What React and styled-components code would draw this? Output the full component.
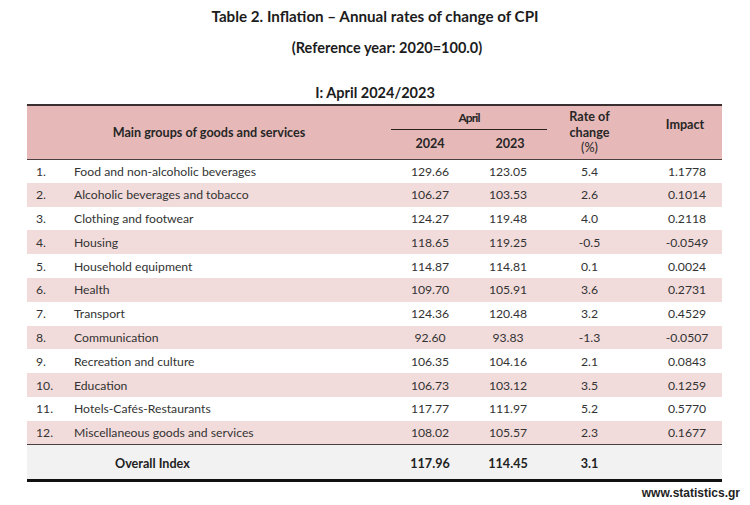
import React from 'react';
import styled, { createGlobalStyle } from 'styled-components';

const Global = createGlobalStyle`
  html, body {
    margin: 0;
    padding: 0;
    background: #ffffff;
  }
  body {
    font-family: Lato, "Open Sans", sans-serif;
    color: #2b2b2b;
  }
`;

const rows = [
  ['1.', 'Food and non-alcoholic beverages', '129.66', '123.05', '5.4', '1.1778'],
  ['2.', 'Alcoholic beverages and tobacco', '106.27', '103.53', '2.6', '0.1014'],
  ['3.', 'Clothing and footwear', '124.27', '119.48', '4.0', '0.2118'],
  ['4.', 'Housing', '118.65', '119.25', '-0.5', '-0.0549'],
  ['5.', 'Household equipment', '114.87', '114.81', '0.1', '0.0024'],
  ['6.', 'Health', '109.70', '105.91', '3.6', '0.2731'],
  ['7.', 'Transport', '124.36', '120.48', '3.2', '0.4529'],
  ['8.', 'Communication', '92.60', '93.83', '-1.3', '-0.0507'],
  ['9.', 'Recreation and culture', '106.35', '104.16', '2.1', '0.0843'],
  ['10.', 'Education', '106.73', '103.12', '3.5', '0.1259'],
  ['11.', 'Hotels-Cafés-Restaurants', '117.77', '111.97', '5.2', '0.5770'],
  ['12.', 'Miscellaneous goods and services', '108.02', '105.57', '2.3', '0.1677'],
];

const Page = styled.div`
  width: 750px;
  height: 505px;
  position: relative;
  overflow: hidden;
`;

const Title = styled.div`
  height: ${p => p.$h}px;
  padding-top: ${p => p.$top}px;
  box-sizing: border-box;
  text-align: center;
  font-weight: 700;
  font-size: ${p => p.$size || 14.5}px;
  color: #1c1c1c;
  padding-left: ${p => p.$shift || 0}px;
`;

const Table = styled.table`
  margin-left: 27px;
  width: 695px;
  border-collapse: collapse;
  table-layout: fixed;
  font-size: 12.2px;
`;

const HeadRow = styled.tr`
  background: #e6b9b8;
  height: ${p => p.$h}px;
`;

const HeadCell = styled.th`
  font-weight: 700;
  font-size: 12.6px;
  color: #262626;
  text-align: center;
  vertical-align: middle;
  padding: 0;
  padding-left: ${p => p.$pl || 0}px;
  border-top: ${p => (p.$top ? '2px solid #3a3030' : 'none')};
  border-bottom: ${p => (p.$line ? '1.5px solid #2a2020' : p.$bottom ? '1px solid #4a4040' : 'none')};
  line-height: 15.5px;
`;

const Light = styled.span`
  font-weight: 400;
`;

const AprilLabel = styled.span`
  letter-spacing: -0.9px;
  font-size: 12px;
`;

const Row = styled.tr`
  height: 23.8px;
  background: ${p => (p.$alt ? '#f2dcdb' : '#ffffff')};
`;

const Cell = styled.td`
  padding: 0;
  padding-left: ${p => p.$pl || 0}px;
  text-align: ${p => p.$align || 'center'};
  color: #333;
  white-space: nowrap;
  vertical-align: middle;
`;

const TotalRow = styled.tr`
  height: 36px;
  background: #f2f2f2;
`;

const TotalCell = styled.td`
  padding: 3px 0 0;
  padding-left: ${p => p.$pl || 0}px;
  text-align: ${p => p.$align || 'center'};
  font-weight: 700;
  font-size: 12.6px;
  color: #222;
  border-top: 1px solid #4a4040;
  border-bottom: 3px solid #111;
  vertical-align: middle;
`;

const Source = styled.div`
  text-align: right;
  padding-right: 10px;
  padding-top: 4px;
  font-family: "Liberation Sans", Arial, sans-serif;
  font-weight: 700;
  font-size: 12px;
  color: #1e1e1e;
`;

export default function App() {
  return (
    <Page>
      <Global />
      <Title $h={31} $top={7} $size={15.2}>Table 2. Inflation – Annual rates of change of CPI</Title>
      <Title $h={53} $top={8} $shift={24}>(Reference year: 2020=100.0)</Title>
      <Title $h={20} $top={0}>I: April 2024/2023</Title>
      <Table>
        <colgroup>
          <col style={{ width: 40 }} />
          <col style={{ width: 324 }} />
          <col style={{ width: 78 }} />
          <col style={{ width: 78 }} />
          <col style={{ width: 85 }} />
          <col style={{ width: 90 }} />
        </colgroup>
        <thead>
          <HeadRow $h={24}>
            <HeadCell colSpan={2} rowSpan={2} $top $bottom>Main groups of goods and services</HeadCell>
            <HeadCell colSpan={2} $top $line><AprilLabel>April</AprilLabel></HeadCell>
            <HeadCell rowSpan={2} $top $bottom>Rate of<br />change<br /><Light>(%)</Light></HeadCell>
            <HeadCell rowSpan={2} $top $bottom $pl={16}>Impact<br />&nbsp;</HeadCell>
          </HeadRow>
          <HeadRow $h={30}>
            <HeadCell $bottom>2024</HeadCell>
            <HeadCell $bottom $pl={4}>2023</HeadCell>
          </HeadRow>
        </thead>
        <tbody>
          {rows.map((r, i) => (
            <Row key={r[0]} $alt={i % 2 === 1}>
              <Cell $align="left" $pl={9}>{r[0]}</Cell>
              <Cell $align="left" $pl={7}>{r[1]}</Cell>
              <Cell>{r[2]}</Cell>
              <Cell $pl={-4}>{r[3]}</Cell>
              <Cell>{r[4]}</Cell>
              <Cell $pl={20}>{r[5]}</Cell>
            </Row>
          ))}
          <TotalRow>
            <TotalCell />
            <TotalCell $align="left" $pl={48}>Overall Index</TotalCell>
            <TotalCell>117.96</TotalCell>
            <TotalCell>114.45</TotalCell>
            <TotalCell>3.1</TotalCell>
            <TotalCell />
          </TotalRow>
        </tbody>
      </Table>
      <Source>www.statistics.gr</Source>
    </Page>
  );
}
